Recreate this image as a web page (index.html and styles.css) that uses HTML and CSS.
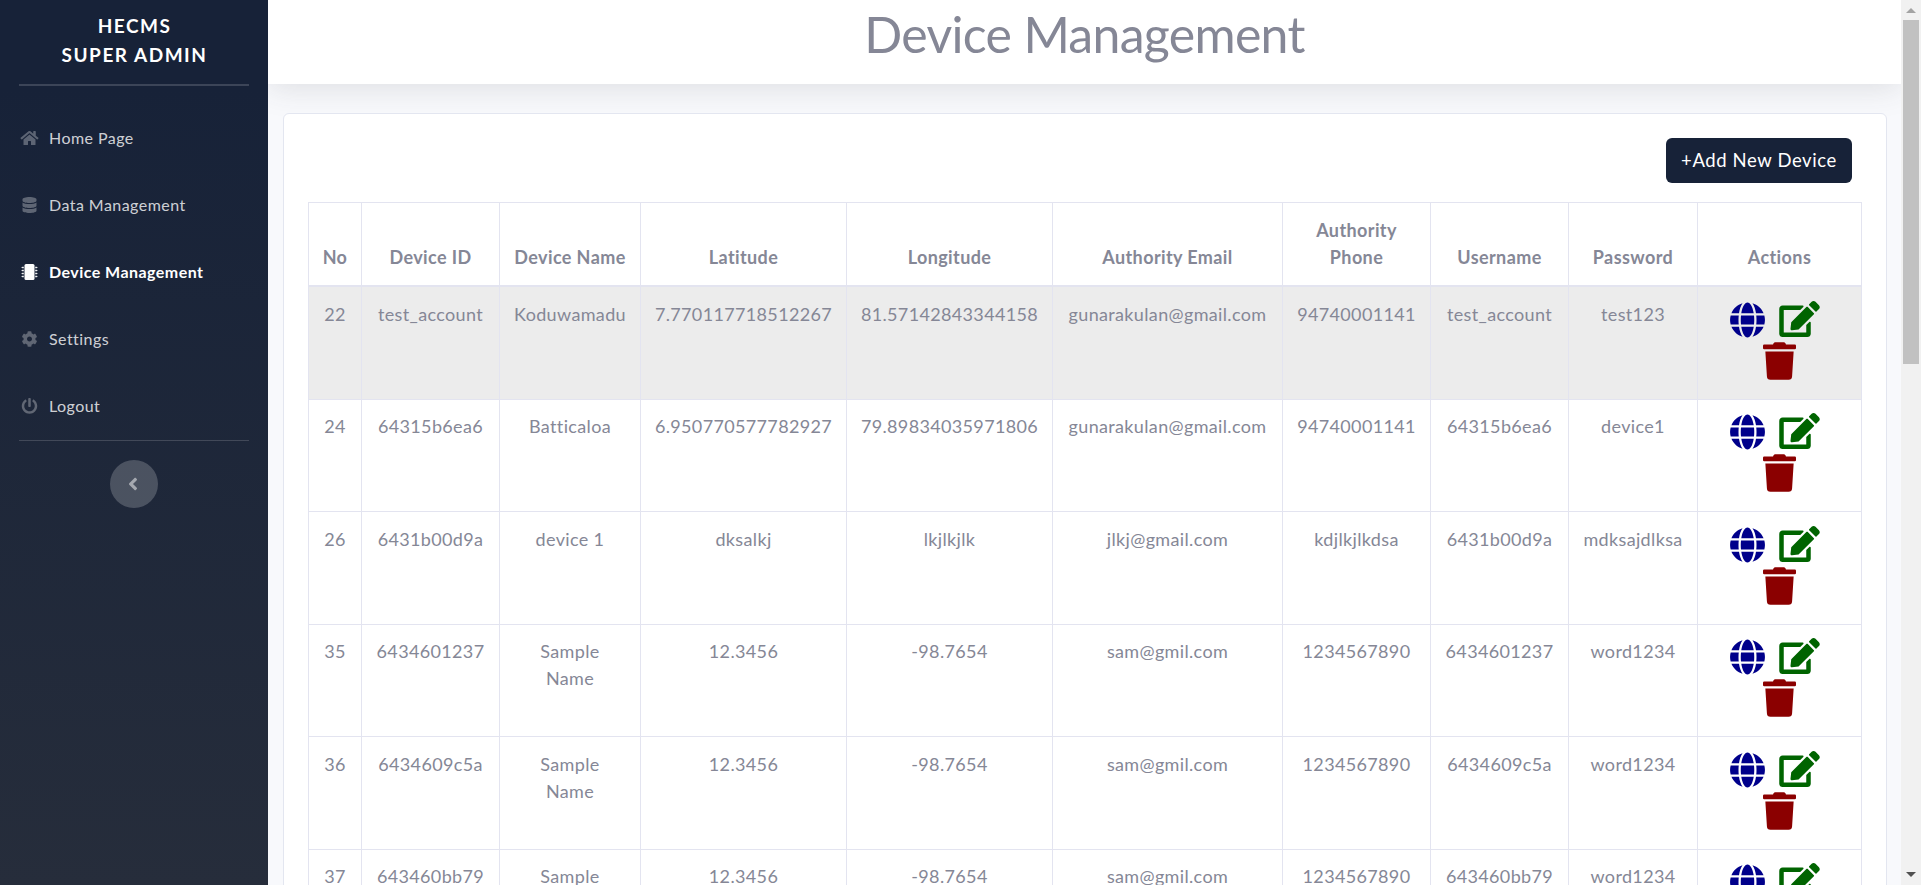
FILE: index.html
```html
<!DOCTYPE html>
<html lang="en">
<head>
<meta charset="utf-8">
<title>Device Management</title>
<link rel="stylesheet" href="styles.css">
</head>
<body>
<svg class="sprite" xmlns="http://www.w3.org/2000/svg">
  <symbol id="globe" viewBox="0 0 496 512"><path d="M336.5 160C322 70.7 287.8 8 248 8s-74 62.7-88.5 152h177zM152 256c0 22.2 1.2 43.5 3.3 64h185.3c2.1-20.5 3.3-41.8 3.3-64s-1.2-43.5-3.3-64H155.3c-2.1 20.5-3.3 41.8-3.3 64zm324.7-96c-28.6-67.9-86.5-120.4-158-141.6 24.4 33.8 41.2 84.7 50 141.6h108zM177.2 18.4C105.8 39.6 47.8 92.1 19.3 160h108c8.7-56.9 25.5-107.8 49.9-141.6zM487.4 192H372.7c2.1 21 3.3 42.5 3.3 64s-1.2 43-3.3 64h114.6c5.5-20.5 8.6-41.8 8.6-64s-3.1-43.5-8.5-64zM120 256c0-21.5 1.2-43 3.3-64H8.6C3.2 212.5 0 233.8 0 256s3.2 43.5 8.6 64h114.6c-2-21-3.2-42.5-3.2-64zm39.5 96c14.5 89.3 48.7 152 88.5 152s74-62.7 88.5-152h-177zm159.3 141.6c71.4-21.2 129.4-73.7 158-141.6h-108c-8.8 56.9-25.6 107.8-50 141.6zM19.3 352c28.6 67.9 86.5 120.4 158 141.6-24.4-33.8-41.2-84.7-50-141.6h-108z"/></symbol>
  <symbol id="edit" viewBox="0 0 576 512"><path d="M402.6 83.2l90.2 90.2c3.8 3.8 3.8 10 0 13.8L274.4 405.6l-92.8 10.3c-12.4 1.4-22.9-9.1-21.5-21.5l10.3-92.8L388.8 83.2c3.8-3.8 10-3.8 13.8 0zm162-22.9l-48.8-48.8c-15.2-15.2-39.9-15.2-55.2 0l-35.4 35.4c-3.8 3.8-3.8 10 0 13.8l90.2 90.2c3.8 3.8 10 3.8 13.8 0l35.4-35.4c15.2-15.3 15.2-40 0-55.2zM384 346.2V448H64V128h229.8c3.2 0 6.2-1.3 8.5-3.5l40-40c7.6-7.6 2.2-20.5-8.5-20.5H48C21.5 64 0 85.5 0 112v352c0 26.5 21.5 48 48 48h352c26.5 0 48-21.5 48-48V306.2c0-10.7-12.9-16-20.5-8.5l-40 40c-2.2 2.3-3.5 5.3-3.5 8.5z"/></symbol>
  <symbol id="trash" viewBox="0 0 448 512"><path d="M432 32H312l-9.4-18.7A24 24 0 0 0 281.1 0H166.8a23.72 23.72 0 0 0-21.4 13.3L136 32H16A16 16 0 0 0 0 48v32a16 16 0 0 0 16 16h416a16 16 0 0 0 16-16V48a16 16 0 0 0-16-16zM53.2 467a48 48 0 0 0 47.9 45h245.8a48 48 0 0 0 47.9-45L416 128H32z"/></symbol>
  <symbol id="home" viewBox="0 0 576 512"><path d="M280.37 148.26L96 300.11V464a16 16 0 0 0 16 16l112.06-.29a16 16 0 0 0 15.92-16V368a16 16 0 0 1 16-16h64a16 16 0 0 1 16 16v95.64a16 16 0 0 0 16 16.05L464 480a16 16 0 0 0 16-16V300L295.67 148.26a12.19 12.19 0 0 0-15.3 0zM571.6 251.47L488 182.56V44.05a12 12 0 0 0-12-12h-56a12 12 0 0 0-12 12v72.61L318.47 43a48 48 0 0 0-61 0L4.34 251.47a12 12 0 0 0-1.6 16.9l25.5 31A12 12 0 0 0 45.15 301l235.22-193.74a12.19 12.19 0 0 1 15.3 0L530.9 301a12 12 0 0 0 16.9-1.6l25.5-31a12 12 0 0 0-1.7-16.93z"/></symbol>
  <symbol id="database" viewBox="0 0 448 512"><path d="M448 73.143v45.714C448 159.143 347.667 192 224 192S0 159.143 0 118.857V73.143C0 32.857 100.333 0 224 0s224 32.857 224 73.143zM448 176v102.857C448 319.143 347.667 352 224 352S0 319.143 0 278.857V176c48.125 33.143 136.208 48.572 224 48.572S399.874 209.143 448 176zm0 160v102.857C448 479.143 347.667 512 224 512S0 479.143 0 438.857V336c48.125 33.143 136.208 48.572 224 48.572S399.874 369.143 448 336z"/></symbol>
  <symbol id="chip" viewBox="0 0 512 512"><rect x="96" width="320" height="512" rx="48"/><path d="M440 88h48v12h24v24h-24v12h-48zM440 184h48v12h24v24h-24v12h-48zM440 280h48v12h24v24h-24v12h-48zM440 376h48v12h24v24h-24v12h-48zM72 88H24v12H0v24h24v12h48zM72 184H24v12H0v24h24v12h48zM72 280H24v12H0v24h24v12h48zM72 376H24v12H0v24h24v12h48z"/></symbol>
  <symbol id="cog" viewBox="0 0 512 512"><path d="M487.4 315.7l-42.6-24.6c4.3-23.2 4.3-47 0-70.2l42.6-24.6c4.9-2.8 7.1-8.6 5.5-14-11.1-35.6-30-67.8-54.7-94.6-3.8-4.1-10-5.1-14.8-2.3L380.8 110c-17.9-15.4-38.5-27.3-60.8-35.1V25.8c0-5.6-3.9-10.5-9.4-11.7-36.7-8.2-74.3-7.8-109.2 0-5.5 1.2-9.4 6.1-9.4 11.7V75c-22.2 7.9-42.8 19.8-60.8 35.1L88.7 85.5c-4.9-2.8-11-1.9-14.8 2.3-24.7 26.7-43.6 58.9-54.7 94.6-1.7 5.4.6 11.2 5.5 14L67.3 221c-4.3 23.2-4.3 47 0 70.2l-42.6 24.6c-4.9 2.8-7.1 8.6-5.5 14 11.1 35.6 30 67.8 54.7 94.6 3.8 4.1 10 5.1 14.8 2.3l42.6-24.6c17.9 15.4 38.5 27.3 60.8 35.1v49.2c0 5.6 3.9 10.5 9.4 11.7 36.7 8.2 74.3 7.8 109.2 0 5.5-1.2 9.4-6.1 9.4-11.7v-49.2c22.2-7.9 42.8-19.8 60.8-35.1l42.6 24.6c4.9 2.8 11 1.9 14.8-2.3 24.7-26.7 43.6-58.9 54.7-94.6 1.5-5.5-.7-11.3-5.6-14.1zM256 336c-44.1 0-80-35.9-80-80s35.9-80 80-80 80 35.9 80 80-35.9 80-80 80z"/></symbol>
  <symbol id="power" viewBox="0 0 512 512"><path d="M400 54.1c63 45 104 118.6 104 201.9 0 136.8-110.8 247.7-247.5 248C120 504.3 8.2 393 8 256.4 7.9 173.1 48.9 99.3 111.8 54.2c11.7-8.3 28-4.8 35 7.7L162.6 90c5.9 10.5 3.1 23.8-6.6 31-41.5 30.8-68 79.6-68 134.9-.1 92.3 74.5 168.1 168 168.1 91.6 0 168.6-74.2 168-169.1-.3-51.8-24.7-101.8-68.1-134-9.7-7.2-12.4-20.5-6.5-30.9l15.8-28.1c7-12.4 23.2-16.1 34.8-7.8zM296 264V24c0-13.3-10.7-24-24-24h-32c-13.3 0-24 10.7-24 24v240c0 13.3 10.7 24 24 24h32c13.3 0 24-10.7 24-24z"/></symbol>
  <symbol id="angle" viewBox="0 0 256 512"><path d="M31.7 239l136-136c9.4-9.4 24.6-9.4 33.9 0l22.6 22.6c9.4 9.4 9.4 24.6 0 33.9L127.900 256l96.400 96.400c9.400 9.400 9.400 24.600 0 33.900L201.700 409c-9.400 9.400-24.600 9.400-33.900 0l-136-136c-9.500-9.400-9.500-24.600-.1-34z"/></symbol>
</svg>
<div class="app">
  <nav class="sidebar">
    <div class="brand">HECMS<br>SUPER ADMIN</div>
    <hr class="rule rule-thick">
    <ul class="menu">
      <li><svg class="nav-icon"><use href="#home"/></svg><span>Home Page</span></li>
      <li><svg class="nav-icon"><use href="#database"/></svg><span>Data Management</span></li>
      <li class="active"><svg class="nav-icon"><use href="#chip"/></svg><span>Device Management</span></li>
      <li><svg class="nav-icon"><use href="#cog"/></svg><span>Settings</span></li>
      <li><svg class="nav-icon"><use href="#power"/></svg><span>Logout</span></li>
    </ul>
    <hr class="rule">
    <button class="toggle"><svg><use href="#angle"/></svg></button>
  </nav>
  <main class="content">
    <header class="topbar"><h1>Device Management</h1></header>
    <section class="card">
      <div class="toolbar"><button class="add">+Add New Device</button></div>
      <table class="devices">
        <colgroup><col class="c1"><col class="c2"><col class="c3"><col class="c4"><col class="c5"><col class="c6"><col class="c7"><col class="c8"><col class="c9"><col class="c10"></colgroup>
        <thead><tr><th>No</th><th>Device ID</th><th>Device Name</th><th>Latitude</th><th>Longitude</th><th>Authority Email</th><th>Authority<br>Phone</th><th>Username</th><th>Password</th><th>Actions</th></tr></thead>
        <tbody>
          <tr class="hovered"><td>22</td><td>test_account</td><td>Koduwamadu</td><td>7.770117718512267</td><td>81.57142843344158</td><td>gunarakulan@gmail.com</td><td>94740001141</td><td>test_account</td><td>test123</td><td class="actions"><div><svg class="globe"><use href="#globe"/></svg><svg class="edit"><use href="#edit"/></svg></div><svg class="trash"><use href="#trash"/></svg></td></tr>
          <tr><td>24</td><td>64315b6ea6</td><td>Batticaloa</td><td>6.950770577782927</td><td>79.89834035971806</td><td>gunarakulan@gmail.com</td><td>94740001141</td><td>64315b6ea6</td><td>device1</td><td class="actions"><div><svg class="globe"><use href="#globe"/></svg><svg class="edit"><use href="#edit"/></svg></div><svg class="trash"><use href="#trash"/></svg></td></tr>
          <tr><td>26</td><td>6431b00d9a</td><td>device 1</td><td>dksalkj</td><td>lkjlkjlk</td><td>jlkj@gmail.com</td><td>kdjlkjlkdsa</td><td>6431b00d9a</td><td>mdksajdlksa</td><td class="actions"><div><svg class="globe"><use href="#globe"/></svg><svg class="edit"><use href="#edit"/></svg></div><svg class="trash"><use href="#trash"/></svg></td></tr>
          <tr><td>35</td><td>6434601237</td><td>Sample<br>Name</td><td>12.3456</td><td>-98.7654</td><td>sam@gmil.com</td><td>1234567890</td><td>6434601237</td><td>word1234</td><td class="actions"><div><svg class="globe"><use href="#globe"/></svg><svg class="edit"><use href="#edit"/></svg></div><svg class="trash"><use href="#trash"/></svg></td></tr>
          <tr><td>36</td><td>6434609c5a</td><td>Sample<br>Name</td><td>12.3456</td><td>-98.7654</td><td>sam@gmil.com</td><td>1234567890</td><td>6434609c5a</td><td>word1234</td><td class="actions"><div><svg class="globe"><use href="#globe"/></svg><svg class="edit"><use href="#edit"/></svg></div><svg class="trash"><use href="#trash"/></svg></td></tr>
          <tr><td>37</td><td>643460bb79</td><td>Sample</td><td>12.3456</td><td>-98.7654</td><td>sam@gmil.com</td><td>1234567890</td><td>643460bb79</td><td>word1234</td><td class="actions"><div><svg class="globe"><use href="#globe"/></svg><svg class="edit"><use href="#edit"/></svg></div><svg class="trash"><use href="#trash"/></svg></td></tr>
        </tbody>
      </table>
    </section>
  </main>
  <div class="scrollbar"><i class="up"></i><i class="thumb"></i><i class="down"></i></div>
</div>
</body>
</html>
```
FILE: styles.css
```css
* { box-sizing: border-box; }
body { margin: 0; height: 885px; overflow: hidden; font-family: Lato, sans-serif; font-size: 18px; line-height: 27px; letter-spacing: .35px; color: #858796; background: #f8f9fc; }
.sprite { display: none; }
svg { fill: currentColor; flex: none; }
.app { display: flex; height: 885px; overflow: hidden; }

.sidebar { width: 268px; flex: none; background: linear-gradient(180deg, #172238 10%, #262d3b 100%); position: relative; z-index: 1; }
.brand { height: 84px; padding: 11px 0 0 1px; text-align: center; color: #fff; font-size: 19px; font-weight: 700; line-height: 29px; letter-spacing: 1.5px; }
.rule { margin: 0 19px; height: 1px; border: 0; background: rgba(255,255,255,.16); }
.rule-thick { height: 2px; }
.menu { list-style: none; margin: 0; padding: 19px 0 0; }
.menu li { display: flex; align-items: center; height: 67px; padding-left: 20px; color: rgba(255,255,255,.8); font-size: 16px; letter-spacing: .45px; }
.menu li span { margin-left: 10px; padding-bottom: 2px; white-space: nowrap; }
.menu .active { color: #fff; font-weight: 700; }
.nav-icon { width: 19px; height: 16px; margin-bottom: 1px; color: rgba(255,255,255,.3); }
.active .nav-icon { color: #fff; }
.toggle { display: flex; align-items: center; justify-content: center; width: 48px; height: 48px; margin: 19px auto 0; padding: 0; border: 0; border-radius: 50%; background: rgba(255,255,255,.2); color: rgba(255,255,255,.5); }
.toggle svg { width: 10px; height: 20px; margin-right: 2px; }

.content { flex: 1; min-width: 0; }
.topbar { height: 84px; background: #fff; box-shadow: 0 3px 32px rgba(58,59,69,.15); }
h1 { margin: 0; padding-top: 3px; text-align: center; font-size: 50px; font-weight: 400; line-height: 62px; letter-spacing: -.7px; }
.card { height: 900px; margin: 29px 14px 0 15px; padding: 24px; border: 1px solid #e3e6f0; border-radius: 6px; background: #fff; position: relative; }
.toolbar { display: flex; justify-content: flex-end; height: 64px; padding-right: 10px; }
.add { width: 186px; height: 45px; padding: 0 0 2px; border: 0; border-radius: 6px; background: #172238; color: #fff; font: 400 18.5px Lato, sans-serif; letter-spacing: .6px; white-space: nowrap; }

.devices { width: 1554px; table-layout: fixed; border-collapse: separate; border-spacing: 0; border-top: 1px solid #e3e4f0; border-left: 1px solid #e3e4f0; text-align: center; }
.c1 { width: 53px; } .c2 { width: 138px; } .c3 { width: 141px; } .c4 { width: 206px; } .c5 { width: 206px; }
.c6 { width: 230px; } .c7 { width: 148px; } .c8 { width: 138px; } .c9 { width: 129px; } .c10 { width: 164px; }
th, td { padding: 14px 0 0; border-right: 1px solid #e3e4f0; border-bottom: 1px solid #e3e4f0; vertical-align: top; white-space: nowrap; }
th { height: 84px; padding: 0 0 14px; border-bottom-width: 2px; vertical-align: bottom; font-weight: 700; letter-spacing: .4px; }
td { height: 112px; }
tr:nth-child(odd) td { height: 113px; }
tr:nth-child(even) td { padding-top: 13px; }
.hovered td { background: #ececec; }
tr td.actions { padding-top: 14px; }
tr:nth-child(even) td.actions { padding-top: 13px; }
.actions div { display: flex; justify-content: center; gap: 14px; padding-right: 9px; height: 41px; }
.globe { width: 35px; height: 36px; margin-top: 1px; color: #00008b; }
.edit { width: 41px; height: 36px; color: #006400; }
.trash { display: block; width: 34px; height: 38px; margin: 0 auto; padding-right: 1px; color: #8b0000; }

.scrollbar { display: flex; flex-direction: column; align-items: center; width: 20px; flex: none; padding: 8px 0; background: #f1f1f1; position: relative; }
.up { border: 5px solid transparent; border-top: 0; border-bottom-color: #a3a3a3; }
.thumb { width: 16px; height: 344px; margin-top: 7px; background: #c1c1c1; }
.down { margin-top: auto; border: 5px solid transparent; border-bottom: 0; border-top-color: #505050; }
```
